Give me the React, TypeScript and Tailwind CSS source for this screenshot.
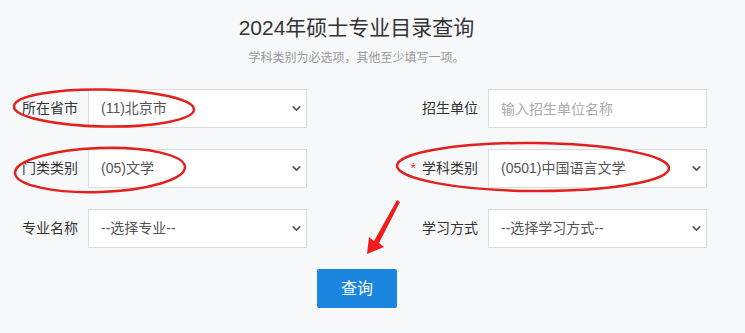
import { ChevronDown } from 'lucide-react';

const font = { fontFamily: '"Liberation Sans", "Noto Sans CJK SC", sans-serif' };

function Field({ label, required, children }: { label: string; required?: boolean; children: React.ReactNode }) {
  return (
    <div className="flex items-center">
      <label className="w-[80px] shrink-0 pr-[10px] text-right text-[14px] text-[#333]">
        {required && <span className="mr-[6px] text-[#e33]">*</span>}
        {label}
      </label>
      {children}
    </div>
  );
}

function Select({ value }: { value: string }) {
  return (
    <div className="relative w-[219px]">
      <select
        defaultValue={value}
        className="h-[39px] w-full appearance-none border border-[#dcdcdc] bg-white pl-[12px] text-[14px] text-[#555] outline-none"
        style={font}
      >
        <option>{value}</option>
      </select>
      <ChevronDown
        size={13}
        strokeWidth={3}
        className="pointer-events-none absolute right-[4px] top-[13px] text-[#555]"
      />
    </div>
  );
}

export default function App() {
  return (
    <div className="relative h-[333px] w-[745px] overflow-hidden bg-[#f7f8fa]" style={font}>
      <div className="pr-[32px] pt-[14px] text-center">
        <h1 className="text-[21px] leading-[28px] text-[#333]">2024年硕士专业目录查询</h1>
        <p className="mt-[8px] text-[12px] leading-[16px] text-[#999]">学科类别为必选项，其他至少填写一项。</p>
      </div>

      <div className="mt-[23px] grid grid-cols-[299px_299px] gap-x-[101px] gap-y-[21px] pl-[8px]">
        <Field label="所在省市">
          <Select value="(11)北京市" />
        </Field>
        <Field label="招生单位">
          <input
            placeholder="输入招生单位名称"
            className="h-[39px] w-[219px] border border-[#dcdcdc] bg-white px-[12px] text-[14px] text-[#555] outline-none placeholder:text-[#aaa]"
            style={font}
          />
        </Field>
        <Field label="门类类别">
          <Select value="(05)文学" />
        </Field>
        <Field label="学科类别" required>
          <Select value="(0501)中国语言文学" />
        </Field>
        <Field label="专业名称">
          <Select value="--选择专业--" />
        </Field>
        <Field label="学习方式">
          <Select value="--选择学习方式--" />
        </Field>
      </div>

      <div className="mt-[21px] flex justify-center pr-[31px]">
        <button className="h-[39px] w-[80px] rounded-[2px] bg-[#1a86df] text-[16px] text-white">查询</button>
      </div>

      {/* red hand-drawn annotations */}
      <svg className="pointer-events-none absolute inset-0" width="745" height="333" viewBox="0 0 745 333">
        <g fill="none" stroke="#e3201b" strokeWidth="2.5">
          <ellipse cx="104" cy="108" rx="90" ry="18.5" transform="rotate(1 104 108)" />
          <ellipse cx="100" cy="170" rx="85" ry="22" transform="rotate(-2 100 170)" />
          <ellipse cx="533" cy="167" rx="136" ry="24" transform="rotate(0.5 533 167)" />
        </g>
        <polygon points="397,200 400,202 379,243 384,247 367,254 369,237 374,241" fill="#ee1c1c" />
      </svg>
    </div>
  );
}
